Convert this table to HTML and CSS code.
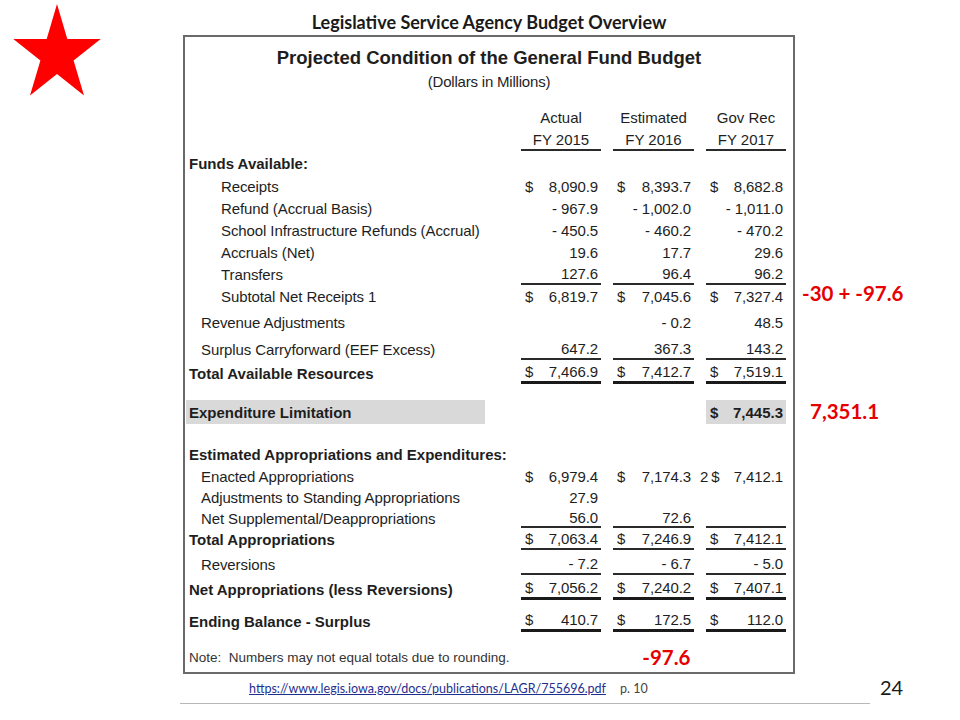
FILE: index.html
```html
<!DOCTYPE html>
<html>
<head>
<meta charset="utf-8">
<link rel="stylesheet" href="styles.css">
</head>
<body>
<div class="slide">
  <div class="star-cell">
    <svg class="star" width="110" height="100" viewBox="0 0 110 100"><path d="M57 4 L67.3 39 L100.7 39 L73.6 60.6 L84 95.5 L57 73.9 L30 95.5 L40.4 60.6 L13.3 39 L46.7 39 Z" fill="#ff0000"/></svg>
  </div>
  <div class="slide-title">Legislative Service Agency Budget Overview</div>
  <div class="box">
    <div class="box-title">Projected Condition of the General Fund Budget</div>
    <div class="box-sub">(Dollars in Millions)</div>

    <div class="row r-head1">
      <div class="lbl"></div>
      <div class="hc">Actual</div>
      <div class="hc">Estimated</div>
      <div class="hc">Gov Rec</div>
    </div>
    <div class="row mt1">
      <div class="lbl"></div>
      <div class="hc ul">FY 2015</div>
      <div class="hc ul">FY 2016</div>
      <div class="hc ul">FY 2017</div>
    </div>
    <div class="row mt1">
      <div class="lbl b">Funds Available:</div>
    </div>
    <div class="row mt1">
      <div class="lbl in2">Receipts</div>
      <div class="c"><span>$</span><span>8,090.9</span></div>
      <div class="c"><span>$</span><span>8,393.7</span></div>
      <div class="c"><span>$</span><span>8,682.8</span></div>
    </div>
    <div class="row">
      <div class="lbl in2">Refund (Accrual Basis)</div>
      <div class="c"><span class="n">- 967.9</span></div>
      <div class="c"><span class="n">- 1,002.0</span></div>
      <div class="c"><span class="n">- 1,011.0</span></div>
    </div>
    <div class="row">
      <div class="lbl in2">School Infrastructure Refunds (Accrual)</div>
      <div class="c"><span class="n">- 450.5</span></div>
      <div class="c"><span class="n">- 460.2</span></div>
      <div class="c"><span class="n">- 470.2</span></div>
    </div>
    <div class="row">
      <div class="lbl in2">Accruals (Net)</div>
      <div class="c"><span class="n">19.6</span></div>
      <div class="c"><span class="n">17.7</span></div>
      <div class="c"><span class="n">29.6</span></div>
    </div>
    <div class="row">
      <div class="lbl in2">Transfers</div>
      <div class="c ul"><span class="n">127.6</span></div>
      <div class="c ul"><span class="n">96.4</span></div>
      <div class="c ul"><span class="n">96.2</span></div>
    </div>
    <div class="row">
      <div class="lbl in2">Subtotal Net Receipts 1</div>
      <div class="c"><span>$</span><span>6,819.7</span></div>
      <div class="c"><span>$</span><span>7,045.6</span></div>
      <div class="c"><span>$</span><span>7,327.4</span></div>
      <div class="note-red nr1">-30 + -97.6</div>
    </div>
    <div class="row mt4">
      <div class="lbl in1">Revenue Adjustments</div>
      <div class="c"></div>
      <div class="c"><span class="n">- 0.2</span></div>
      <div class="c"><span class="n">48.5</span></div>
    </div>
    <div class="row mt5">
      <div class="lbl in1">Surplus Carryforward (EEF Excess)</div>
      <div class="c ul"><span class="n">647.2</span></div>
      <div class="c ul"><span class="n">367.3</span></div>
      <div class="c ul"><span class="n">143.2</span></div>
    </div>
    <div class="row mt2">
      <div class="lbl b">Total Available Resources</div>
      <div class="c dul"><span>$</span><span>7,466.9</span></div>
      <div class="c dul"><span>$</span><span>7,412.7</span></div>
      <div class="c dul"><span>$</span><span>7,519.1</span></div>
    </div>
    <div class="row r-exp">
      <div class="lbl b"><span class="shade">Expenditure Limitation</span></div>
      <div class="c"></div>
      <div class="c"></div>
      <div class="c shade-c b"><span>$</span><span>7,445.3</span></div>
      <div class="note-red nr2">7,351.1</div>
    </div>
    <div class="row r-est">
      <div class="lbl b">Estimated Appropriations and Expenditures:</div>
    </div>
    <div class="row">
      <div class="lbl in1">Enacted Appropriations</div>
      <div class="c"><span>$</span><span>6,979.4</span></div>
      <div class="c"><span>$</span><span>7,174.3</span></div>
      <div class="c"><span><span class="fn">2</span>$</span><span>7,412.1</span></div>
    </div>
    <div class="row h21">
      <div class="lbl in1">Adjustments to Standing Appropriations</div>
      <div class="c"><span class="n">27.9</span></div>
    </div>
    <div class="row h20">
      <div class="lbl in1">Net Supplemental/Deappropriations</div>
      <div class="c ul"><span class="n">56.0</span></div>
      <div class="c ul"><span class="n">72.6</span></div>
      <div class="c ul"></div>
    </div>
    <div class="row">
      <div class="lbl b">Total Appropriations</div>
      <div class="c ul"><span>$</span><span>7,063.4</span></div>
      <div class="c ul"><span>$</span><span>7,246.9</span></div>
      <div class="c ul"><span>$</span><span>7,412.1</span></div>
    </div>
    <div class="row mt3">
      <div class="lbl in1">Reversions</div>
      <div class="c ul"><span class="n">- 7.2</span></div>
      <div class="c ul"><span class="n">- 6.7</span></div>
      <div class="c ul"><span class="n">- 5.0</span></div>
    </div>
    <div class="row mt3">
      <div class="lbl b">Net Appropriations (less Reversions)</div>
      <div class="c dul"><span>$</span><span>7,056.2</span></div>
      <div class="c dul"><span>$</span><span>7,240.2</span></div>
      <div class="c dul"><span>$</span><span>7,407.1</span></div>
    </div>
    <div class="row mt10">
      <div class="lbl b">Ending Balance - Surplus</div>
      <div class="c dul"><span>$</span><span>410.7</span></div>
      <div class="c dul"><span>$</span><span>172.5</span></div>
      <div class="c dul"><span>$</span><span>112.0</span></div>
    </div>
    <div class="row mt13">
      <div class="lbl note">Note:&nbsp; Numbers may not equal totals due to rounding.</div>
      <div class="c"></div>
      <div class="c red-cell"><span class="n">-97.6</span></div>
      <div class="c"></div>
    </div>
  </div>
  <div class="source"><a class="src-link" href="#">https://www.legis.iowa.gov/docs/publications/LAGR/755696.pdf</a><span class="page-ref">p. 10</span></div>
  <div class="page-num">24</div>
</div>
<div class="rule"></div>
</body>
</html>
```
FILE: styles.css
```css
html, body {
  margin: 0;
  padding: 0;
  background: #ffffff;
}
body {
  width: 960px;
  height: 720px;
  overflow: hidden;
}
.slide {
  display: grid;
  grid-template-columns: 183px 612px 1fr;
  grid-template-rows: 35px 639px 29px;
}
.star-cell {
  grid-column: 1;
  grid-row: 1 / 3;
  align-self: start;
}
.star {
  display: block;
}
.slide-title {
  grid-column: 2;
  grid-row: 1;
  font-family: Lato, "Open Sans", sans-serif;
  font-weight: 700;
  font-size: 18px;
  line-height: 20px;
  padding-top: 12px;
  text-align: center;
  color: #1a1a1a;
}
.box {
  grid-column: 2;
  grid-row: 2;
  border: 2px solid #6a6a6a;
  box-sizing: border-box;
  font-family: "Liberation Sans", Arial, sans-serif;
  color: #1e1e1e;
  padding-top: 10px;
}
.box-title {
  font-weight: 700;
  font-size: 18.5px;
  line-height: 22px;
  text-align: center;
}
.box-sub {
  font-size: 15px;
  line-height: 18px;
  margin-top: 4px;
  text-align: center;
  letter-spacing: -0.2px;
}
.row {
  position: relative;
  display: grid;
  grid-template-columns: 1fr 80px 81px 80px;
  column-gap: 12px;
  height: 22px;
  padding: 0 7px 0 4px;
  font-size: 15px;
  letter-spacing: -0.1px;
}
.r-head1 { margin-top: 15px; }
.mt1 { margin-top: 1px; }
.mt2 { margin-top: 2px; }
.mt3 { margin-top: 3px; }
.mt4 { margin-top: 4px; }
.mt5 { margin-top: 5px; }
.mt10 { margin-top: 10px; }
.mt13 { margin-top: 13px; }
.r-exp { margin-top: 16px; height: 24px; }
.r-est { margin-top: 19px; }
.h21 { height: 21px; }
.h20 { height: 20px; }
.lbl {
  display: flex;
  align-items: center;
  white-space: nowrap;
}
.b { font-weight: 700; letter-spacing: 0; }
.in1 { padding-left: 12px; }
.in2 { padding-left: 32px; }
.shade {
  background: #d9d9d9;
  margin-left: -3px;
  padding-left: 3px;
  width: 296px;
  height: 24px;
  display: flex;
  align-items: center;
}
.hc {
  display: flex;
  align-items: center;
  justify-content: center;
  box-sizing: border-box;
  letter-spacing: 0;
}
.c {
  display: flex;
  align-items: center;
  justify-content: space-between;
  padding: 0 3px 0 4px;
  box-sizing: border-box;
  white-space: nowrap;
}
.c .n { margin-left: auto; }
.ul { border-bottom: 2px solid #2a2a2a; }
.dul { border-bottom: 3px solid #1a1a1a; }
.shade-c { background: #d9d9d9; }
.fn { margin-left: -10px; margin-right: 3px; font-weight: 400; }
.note {
  font-size: 13.5px;
  letter-spacing: 0;
  color: #333;
}
.red-cell {
  font-family: Lato, "Open Sans", sans-serif;
  font-weight: 700;
  font-size: 20.5px;
  color: #e60000;
  letter-spacing: 0;
  padding-right: 4px;
}
.note-red {
  position: absolute;
  top: -4px;
  font-family: Lato, "Open Sans", sans-serif;
  font-weight: 700;
  font-size: 20.5px;
  line-height: 26px;
  color: #e60000;
  white-space: nowrap;
  letter-spacing: 0;
}
.nr1 { left: calc(100% + 9px); top: -5px; }
.nr2 { left: calc(100% + 17px); top: -2px; }
.source {
  grid-column: 2;
  grid-row: 3;
  padding-left: 66px;
  padding-top: 7px;
  font-family: Lato, "Open Sans", sans-serif;
  font-size: 12.5px;
  line-height: 16px;
  white-space: nowrap;
}
.src-link {
  color: #1f2f8f;
  text-decoration: underline;
}
.page-ref {
  margin-left: 14px;
  color: #444;
}
.page-num {
  grid-column: 3;
  grid-row: 3;
  padding-left: 85px;
  padding-top: 1px;
  font-family: Lato, "Open Sans", sans-serif;
  font-size: 20px;
  line-height: 24px;
  color: #1a1a1a;
}
.rule {
  margin-left: 180px;
  width: 690px;
  height: 1px;
  background: #b8b8b8;
}
```
